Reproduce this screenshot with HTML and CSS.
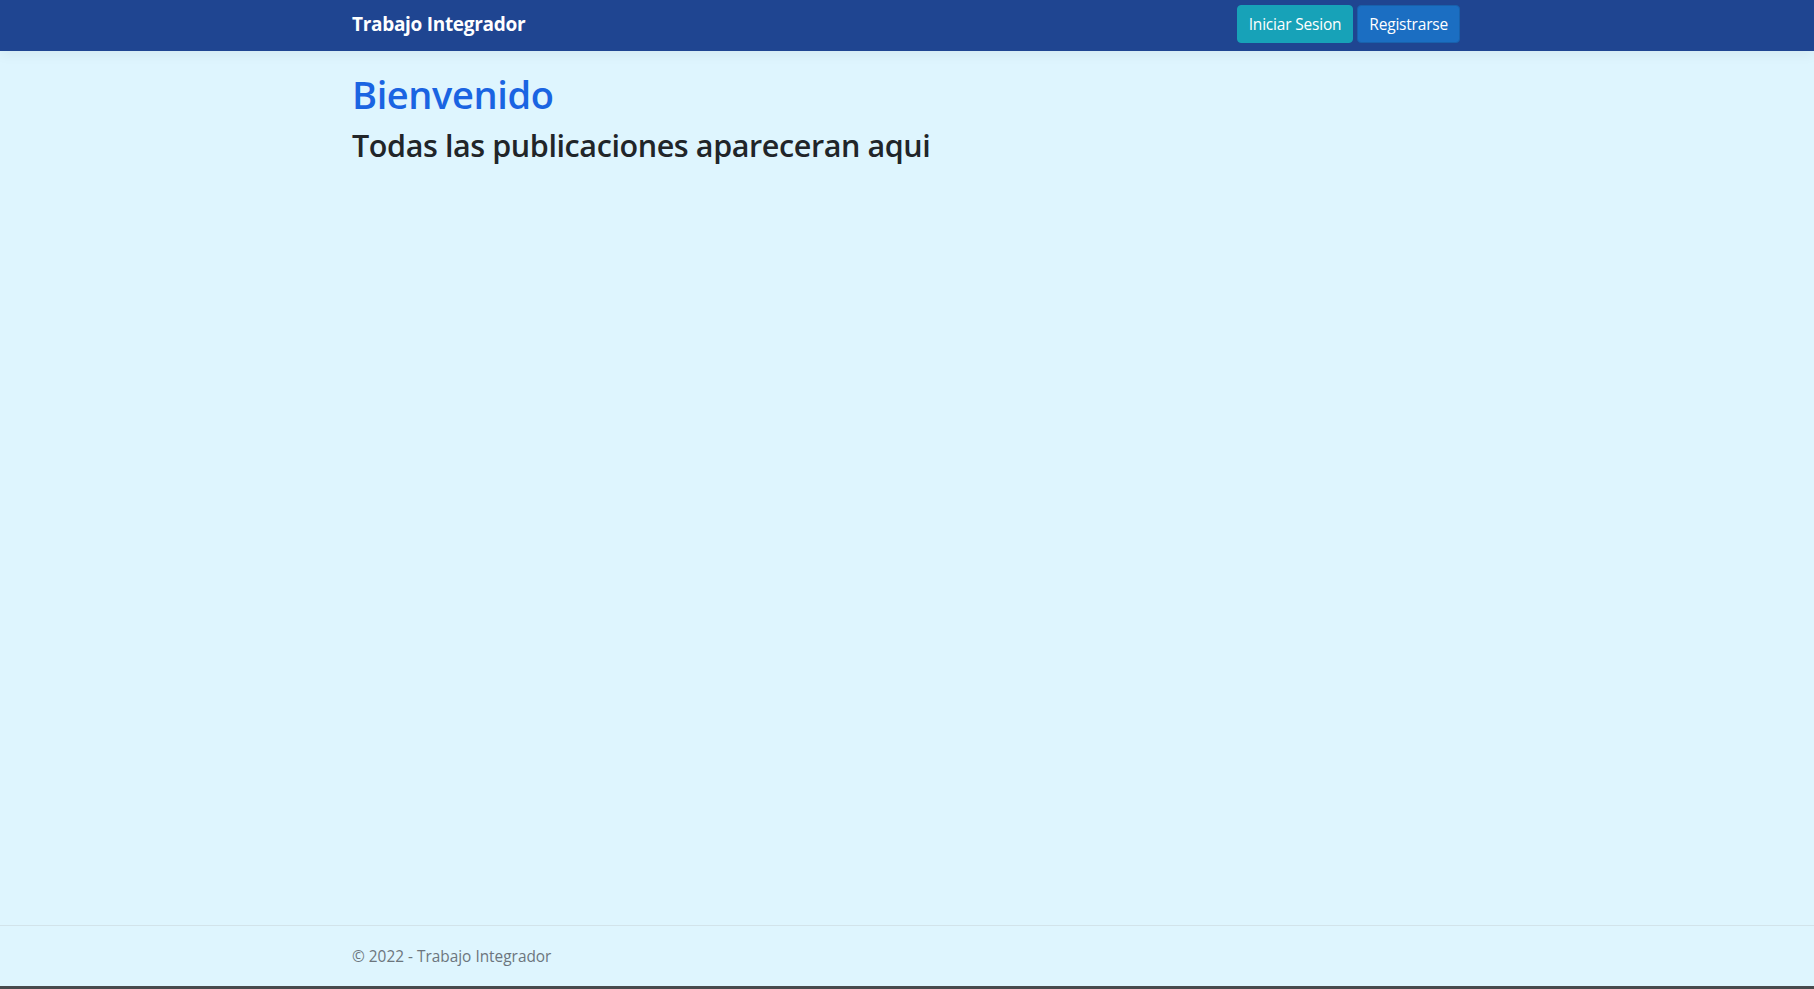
FILE: index.html
```html
<!DOCTYPE html>
<html lang="es">
<head>
<meta charset="utf-8">
<title>Trabajo Integrador</title>
<link rel="stylesheet" href="styles.css">
</head>
<body>
<header class="topbar">
  <div class="container topbar-inner">
    <a class="brand" href="#">Trabajo Integrador</a>
    <div class="actions">
      <a class="btn btn-info" href="#">Iniciar Sesion</a>
      <a class="btn btn-primary" href="#">Registrarse</a>
    </div>
  </div>
</header>
<main class="main">
  <div class="container">
    <h1 class="title">Bienvenido</h1>
    <h2 class="subtitle">Todas las publicaciones apareceran aqui</h2>
  </div>
</main>
<footer class="footer">
  <div class="container footer-inner">&copy; 2022 - Trabajo Integrador</div>
</footer>
<div class="bottom-bar"></div>
</body>
</html>
```
FILE: styles.css
```css
* { box-sizing: border-box; }
html, body { margin: 0; padding: 0; }
body {
  min-height: 100vh;
  display: flex;
  flex-direction: column;
  background: #def5fe;
  color: #212529;
  font-family: "Open Sans", "Noto Sans", sans-serif;
  font-size: 16px;
  line-height: 1.5;
}
.container {
  width: 100%;
  max-width: 1140px;
  margin: 0 auto;
  padding: 0 15px;
}
.topbar {
  background: #1f4591;
  height: 51px;
  box-shadow: 0 4px 12px rgba(0,0,0,.05);
  position: relative;
  z-index: 1;
}
.topbar-inner {
  display: flex;
  justify-content: space-between;
  align-items: flex-start;
  padding-top: 5px;
}
.brand {
  color: #fff;
  text-decoration: none;
  font-weight: 700;
  font-size: 19px;
  line-height: 38px;
  letter-spacing: -0.3px;
}
.actions {
  display: flex;
  gap: 4px;
  margin-right: 2px;
}
.btn {
  display: inline-block;
  height: 38px;
  padding: 0 11px;
  border: 1px solid transparent;
  border-radius: 4px;
  color: #fff;
  text-decoration: none;
  font-size: 15.5px;
  line-height: 36px;
  letter-spacing: -0.2px;
}
.btn-info { background: #17a2b8; border-color: #17a2b8; }
.btn-primary { background: #1b6ec2; border-color: #1861ac; }
.main { flex: 1; }
.title {
  margin: 21px 0 0;
  font-size: 38px;
  font-weight: 600;
  line-height: 1.2;
  color: #1a64e2;
  letter-spacing: -0.4px;
}
.subtitle {
  margin: 9px 0 0;
  font-size: 30.5px;
  font-weight: 600;
  line-height: 1.2;
  color: #212529;
  letter-spacing: -0.4px;
}
.footer {
  border-top: 1px solid #d2e3ea;
  height: 61px;
}
.footer-inner {
  line-height: 60px;
  padding-top: 1px;
  color: #6c757d;
  font-size: 15.4px;
}
.bottom-bar {
  height: 3px;
  background: #474a4d;
}
```
